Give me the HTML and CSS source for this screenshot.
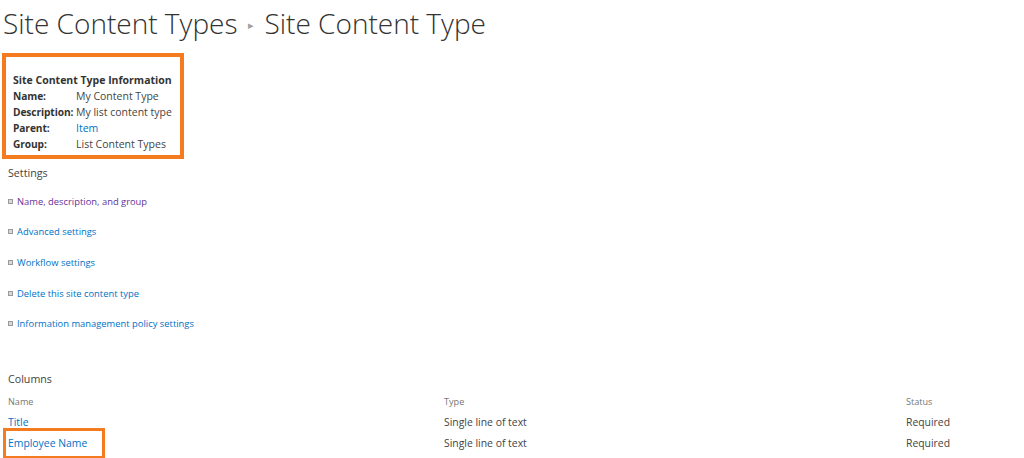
FILE: index.html
```html
<!DOCTYPE html>
<html>
<head>
<meta charset="utf-8">
<link rel="stylesheet" href="styles.css">
</head>
<body>
<div class="page">
  <h1 class="title"><span>Site Content Types</span><span class="sep">&#9656;</span><span>Site Content Type</span></h1>

  <div class="info">
    <div class="info-head">Site Content Type Information</div>
    <div class="info-grid">
      <div class="lbl">Name:</div><div class="val">My Content Type</div>
      <div class="lbl">Description:</div><div class="val">My list content type</div>
      <div class="lbl">Parent:</div><div class="val"><a class="link" href="#">Item</a></div>
      <div class="lbl">Group:</div><div class="val">List Content Types</div>
    </div>
  </div>

  <div class="section-label settings-label">Settings</div>
  <ul class="settings">
    <li><span class="bullet"></span><a class="link visited" href="#">Name, description, and group</a></li>
    <li><span class="bullet"></span><a class="link" href="#">Advanced settings</a></li>
    <li><span class="bullet"></span><a class="link" href="#">Workflow settings</a></li>
    <li><span class="bullet"></span><a class="link" href="#">Delete this site content type</a></li>
    <li><span class="bullet"></span><a class="link" href="#">Information management policy settings</a></li>
  </ul>

  <div class="section-label columns-label">Columns</div>
  <div class="cols">
    <div class="hd">Name</div><div class="hd">Type</div><div class="hd">Status</div>
    <div class="cell"><a class="link" href="#">Title</a></div><div class="cell">Single line of text</div><div class="cell">Required</div>
    <div class="cell"><span class="hl"><a class="link" href="#">Employee Name</a></span></div><div class="cell">Single line of text</div><div class="cell">Required</div>
  </div>
</div>
</body>
</html>
```
FILE: styles.css
```css
html, body { margin: 0; padding: 0; background: #fff; }
body { font-family: "Open Sans", "Noto Sans", sans-serif; color: #444; font-size: 11px; overflow: hidden; }
.page { padding: 0; width: 1024px; height: 458px; }
.title {
  margin: 0; padding: 3px 0 0 3px;
  font-weight: 300; font-size: 28px; line-height: 36px; color: #333;
  display: flex; align-items: center; gap: 0;
}
.sep { font-size: 11px; color: #a0a0a0; margin: 4px 11px 0 10px; }
.info {
  margin: 10px 0 0 2px;
  width: 174px; height: 98px;
  border: 4px solid #f47b20;
  padding: 0;
  box-sizing: content-box;
}
.info-head { font-weight: 700; color: #333; font-size: 10.5px; padding: 15px 0 0 7px; line-height: 16px; }
.info-grid {
  display: grid; grid-template-columns: 63px auto;
  padding-left: 7px; line-height: 16px; font-size: 10.5px;
}
.lbl { font-weight: 700; color: #333; white-space: nowrap; font-size: 10.2px; letter-spacing: -0.1px; }
.val { color: #444; white-space: nowrap; }
.link { color: #0072c6; text-decoration: none; }
.link.visited { color: #663399; }
.section-label { color: #444; font-size: 10.7px; padding-left: 8px; line-height: 16px; }
.settings-label { margin-top: 6px; }
.settings { list-style: none; margin: 12px 0 0 0; padding: 0 0 0 8px; }
.settings li { display: flex; align-items: center; height: 16px; margin-bottom: 14.7px; font-size: 9.4px; }
.bullet { width: 3px; height: 3px; border: 1px solid #9a9a9a; background: #d8d8d8; margin-right: 4px; }
.columns-label { margin-top: 39px; }
.cols {
  display: grid; grid-template-columns: 436px 462px auto;
  padding-left: 8px; margin-top: 7px;
}
.hd { font-size: 9.1px; color: #777; line-height: 16px; height: 18px; }
.cell { font-size: 10.4px; line-height: 20px; height: 21px; color: #444; white-space: nowrap; }
.hl { display: inline-block; position: relative; }
.hl::before {
  content: ""; position: absolute; left: -5px; top: -5px; right: -18px; bottom: -6px;
  border: 3px solid #f47b20;
}
```
